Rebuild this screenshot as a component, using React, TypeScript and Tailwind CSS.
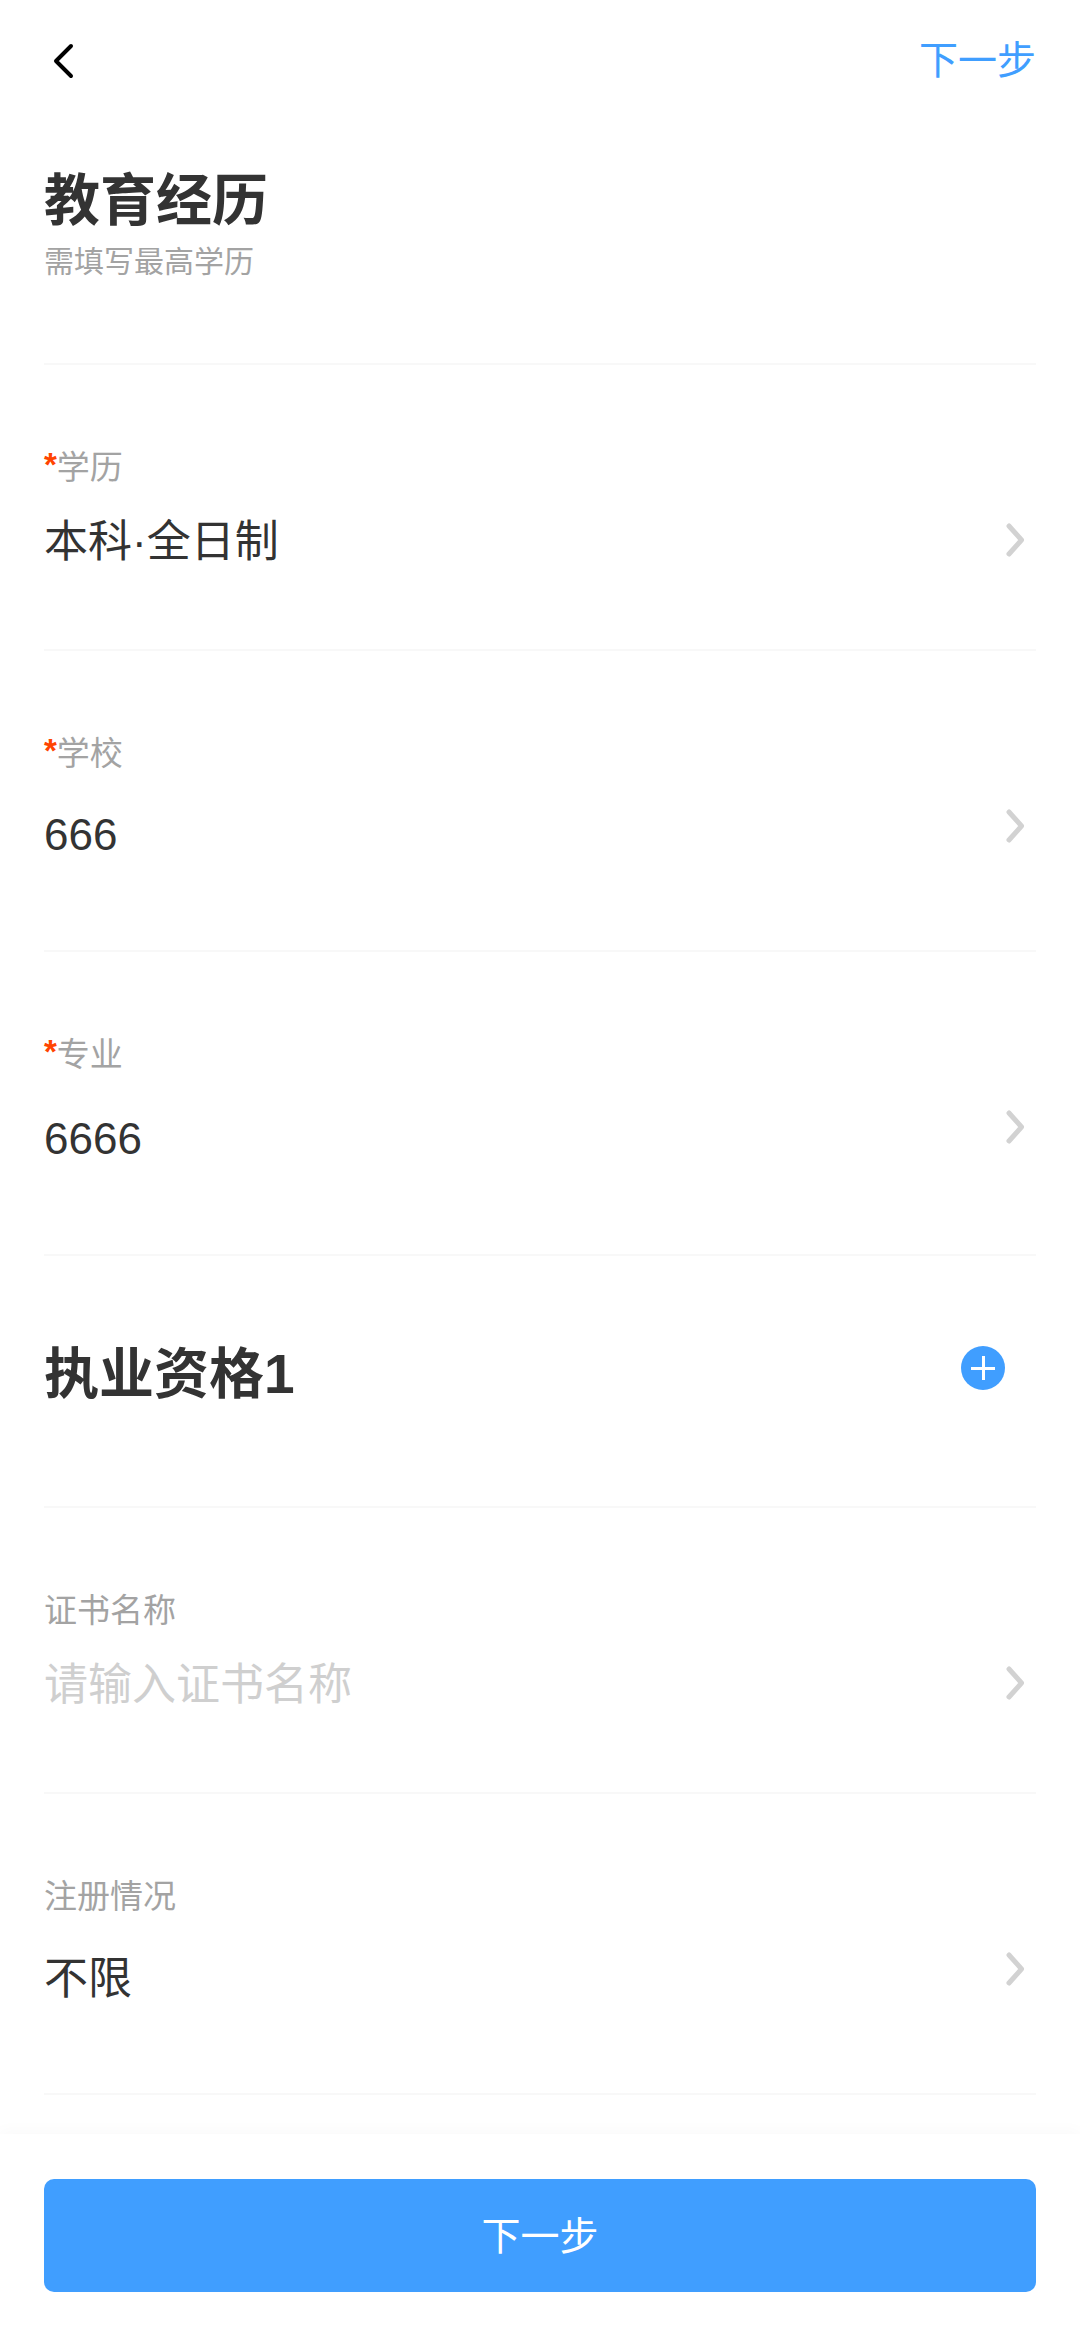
const font = { fontFamily: '"Liberation Sans", "Noto Sans CJK SC", sans-serif' }

function Chevron({ className }: { className: string }) {
  return (
    <svg className={className} width="24" height="40" viewBox="0 0 24 40" fill="none">
      <path d="M6 6L18.5 20L6 34" stroke="#d2d2d2" strokeWidth="5" strokeLinecap="round" strokeLinejoin="round" />
    </svg>
  )
}

type FieldProps = {
  label: string
  value: string
  required?: boolean
  placeholder?: boolean
  height: string
  gap: string
}

function Field({ label, value, required, placeholder, height, gap }: FieldProps) {
  return (
    <div className={`flex justify-between border-b-2 border-[#f8f8f8] ${height}`}>
      <div className="pt-[81px]">
        <div className="text-[33px] leading-[44px] text-[#a3a3a3]">
          {required && <span className="relative top-[-3px] font-bold text-[#ff4400]">*</span>}
          {label}
        </div>
        <div className={`text-[44px] leading-[60px] ${gap} ${placeholder ? 'text-[#cfcfcf]' : 'text-[#333333]'}`}>
          {value}
        </div>
      </div>
      <Chevron className="mt-[155px] mr-[9px]" />
    </div>
  )
}

export default function App() {
  return (
    <div className="flex h-[2337px] flex-col overflow-hidden bg-white" style={font}>
      <main className="min-h-0 flex-1 px-[44px]">
        <header className="flex h-[122px] items-center justify-between">
          <svg className="ml-[8px]" width="24" height="40" viewBox="0 0 24 40" fill="none">
            <path d="M19 5L4 20L19 35" stroke="#000000" strokeWidth="4" strokeLinecap="round" strokeLinejoin="round" />
          </svg>
          <span className="text-[39px] leading-[50px] text-[#409eff]">下一步</span>
        </header>

        <section className="h-[243px] border-b-2 border-[#f8f8f8] pt-[47px]">
          <h1 className="text-[56px] leading-[64px] font-bold text-[#333333]">教育经历</h1>
          <p className="mt-[9px] text-[30px] leading-[40px] text-[#a3a3a3]">需填写最高学历</p>
        </section>

        <Field required label="学历" value="本科·全日制" height="h-[286px]" gap="mt-[22px]" />
        <Field required label="学校" value="666" height="h-[301px]" gap="mt-[29px]" />
        <Field required label="专业" value="6666" height="h-[304px]" gap="mt-[32px]" />

        <section className="flex h-[252px] justify-between border-b-2 border-[#f8f8f8] pr-[31px]">
          <h2 className="pt-[84px] text-[55px] leading-[68px] font-bold text-[#333333]">执业资格1</h2>
          <div className="relative mt-[90px] size-[44px] rounded-full bg-[#409eff]">
            <div className="absolute top-[21px] left-[10px] h-[3px] w-[24px] bg-white" />
            <div className="absolute top-[10px] left-[21px] h-[24px] w-[3px] bg-white" />
          </div>
        </section>

        <Field label="证书名称" value="请输入证书名称" placeholder height="h-[286px]" gap="mt-[22px]" />
        <Field label="注册情况" value="不限" height="h-[301px]" gap="mt-[30px]" />
      </main>

      <footer className="h-[203px] bg-white px-[44px] pt-[45px] shadow-[0_-4px_14px_rgba(0,0,0,0.025)]">
        <button className="h-[113px] w-full rounded-[10px] bg-[#409eff] pt-[4px] text-[39px] text-white">下一步</button>
      </footer>
    </div>
  )
}
